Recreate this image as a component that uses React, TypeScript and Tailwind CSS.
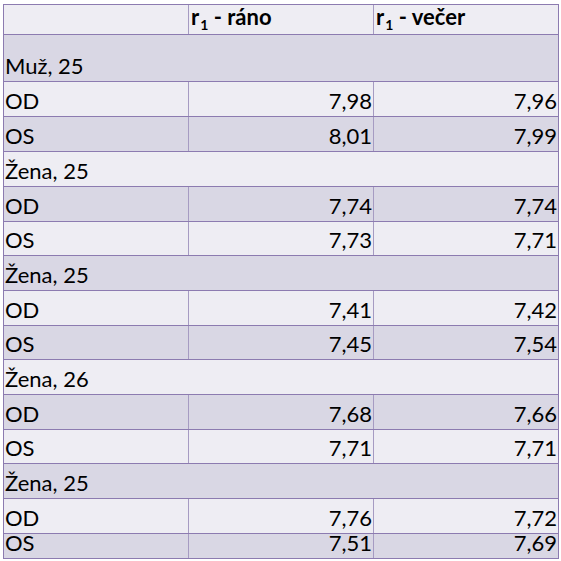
type Row = { label: string; a?: string; b?: string; h: string; dark: boolean; group?: boolean };

const rows: Row[] = [
  { label: "Muž, 25", h: "h-[47px]", dark: true, group: true },
  { label: "OD", a: "7,98", b: "7,96", h: "h-[35px]", dark: false },
  { label: "OS", a: "8,01", b: "7,99", h: "h-[35px]", dark: true },
  { label: "Žena, 25", h: "h-[35px]", dark: false, group: true },
  { label: "OD", a: "7,74", b: "7,74", h: "h-[35px]", dark: true },
  { label: "OS", a: "7,73", b: "7,71", h: "h-[34px]", dark: false },
  { label: "Žena, 25", h: "h-[35px]", dark: true, group: true },
  { label: "OD", a: "7,41", b: "7,42", h: "h-[35px]", dark: false },
  { label: "OS", a: "7,45", b: "7,54", h: "h-[34px]", dark: true },
  { label: "Žena, 26", h: "h-[35px]", dark: false, group: true },
  { label: "OD", a: "7,68", b: "7,66", h: "h-[35px]", dark: true },
  { label: "OS", a: "7,71", b: "7,71", h: "h-[34px]", dark: false },
  { label: "Žena, 25", h: "h-[35px]", dark: true, group: true },
  { label: "OD", a: "7,76", b: "7,72", h: "h-[35px]", dark: false },
  { label: "OS", a: "7,51", b: "7,69", h: "h-[25px]", dark: true },
];

function HeadCell({ text }: { text: string }) {
  return (
    <span>
      r<span className="text-[14px] relative top-[5px] ml-[1px]">1</span> - {text}
    </span>
  );
}

export default function App() {
  return (
    <div className="w-[561px] h-[561px] bg-white pt-[4px] pl-[3px] text-black font-['Lato',sans-serif] text-[22px] leading-none">
      <div className="w-[556px] border border-[#8c7bb0]">
        <div className="flex h-[29px] bg-[#eeedf3] font-bold">
          <div className="w-[185px] border-r border-[#a69bc2]" />
          <div className="w-[185px] border-r border-[#a69bc2] flex items-end pb-[6px] pl-[2px]">
            <HeadCell text="ráno" />
          </div>
          <div className="flex-1 flex items-end pb-[6px] pl-[2px]">
            <HeadCell text="večer" />
          </div>
        </div>
        {rows.map((r, i) => (
          <div
            key={i}
            className={`flex border-t border-[#8c7bb0] ${r.h} ${r.dark ? "bg-[#d9d7e4]" : "bg-[#eeedf3]"}`}
          >
            {r.group ? (
              <div className="flex-1 flex items-end pb-[4px] pl-[1px]">{r.label}</div>
            ) : (
              <>
                <div className="w-[185px] border-r border-[#a69bc2] flex items-end pb-[4px] pl-[1px]">{r.label}</div>
                <div className="w-[185px] border-r border-[#a69bc2] flex items-end justify-end pb-[4px] pr-[1px]">{r.a}</div>
                <div className="flex-1 flex items-end justify-end pb-[4px] pr-[1px]">{r.b}</div>
              </>
            )}
          </div>
        ))}
      </div>
    </div>
  );
}
